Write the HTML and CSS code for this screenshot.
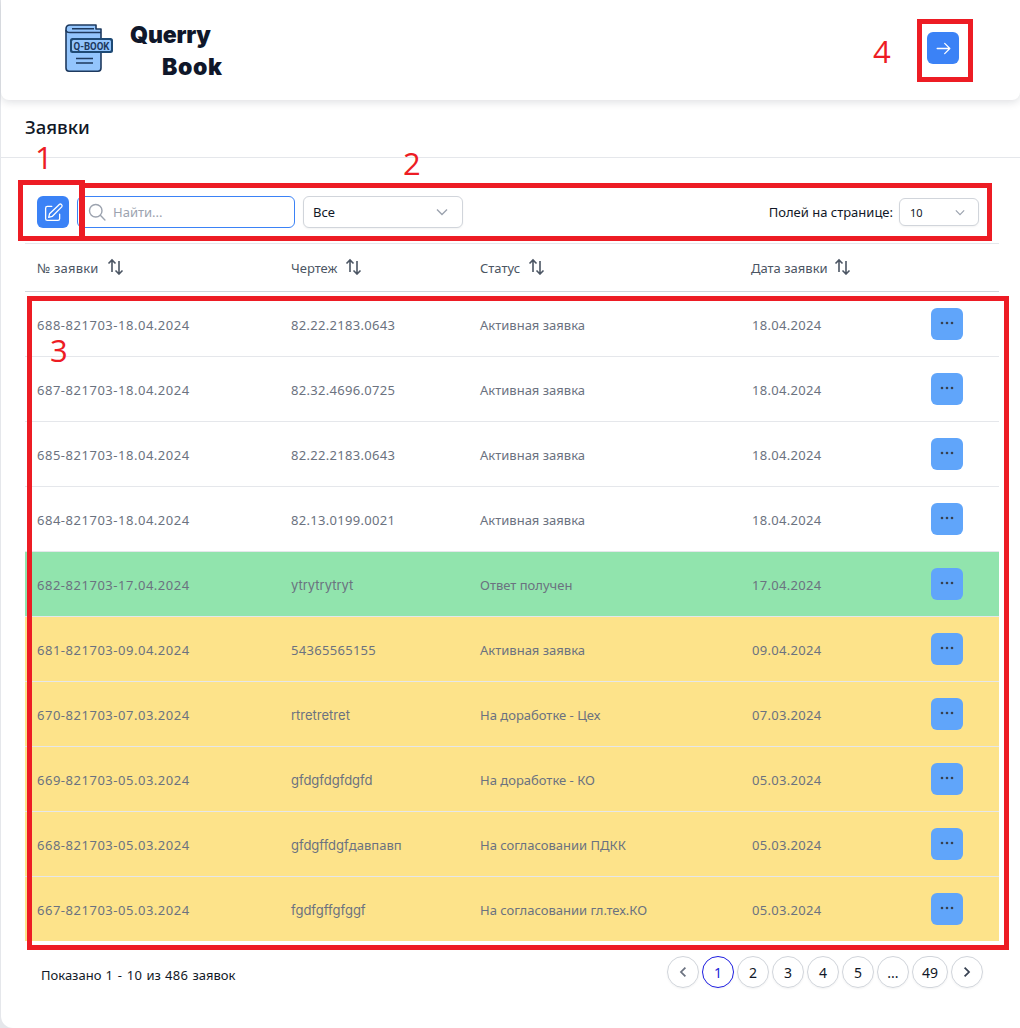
FILE: index.html
```html
<!DOCTYPE html>
<html lang="ru">
<head>
<meta charset="utf-8">
<title>Заявки</title>
<link rel="stylesheet" href="styles.css">
</head>
<body>
<div class="app">
  <header class="topbar">
    <div class="brand">
      <svg class="logo" viewBox="0 0 48 48" width="48" height="48">
        <path d="M5 1H31V5H36V44Q36 47.200 33 47.200H4Q1 47.200 1 44V5Q1 1 5 1Z" fill="#93c5fd" stroke="#1e3a5f" stroke-width="1.600" stroke-linejoin="round"/>
        <path d="M1 6Q1 8.500 5 8.500H36M7 4.800H29" fill="none" stroke="#1e3a5f" stroke-width="1.400"/>
        <rect x="5" y="14" width="43" height="15" rx="2.500" fill="#1e4a75"/>
        <rect x="7" y="16" width="39" height="11" rx="1.500" fill="#93c5fd"/>
        <text x="8.500" y="25.500" class="logo-text" textLength="36" lengthAdjust="spacingAndGlyphs">Q-BOOK</text>
        <path d="M11 34.500H28M11 39H28" stroke="#1e3a5f" stroke-width="1.600"/>
      </svg>
      <div class="wordmark">
        <span class="word-one">Querry</span>
        <span class="word-two">Book</span>
      </div>
    </div>
    <button class="btn btn-primary" type="button" aria-label="Выйти">
      <svg viewBox="0 0 24 24" width="19" height="19" fill="none" stroke="#fff" stroke-width="1.600" stroke-linecap="round" stroke-linejoin="round"><path d="M4 12H20M13.500 5.500L20 12L13.500 18.500"/></svg>
    </button>
  </header>

  <main class="content">
    <h1 class="title">Заявки</h1>

    <div class="toolbar">
      <button class="btn btn-primary" type="button" aria-label="Создать">
        <svg viewBox="0 0 24 24" width="21" height="21" fill="none" stroke="#fff" stroke-width="1.500" stroke-linecap="round" stroke-linejoin="round"><path d="M16.900 4.500l1.700-1.700a2 2 0 0 1 2.800 2.800L10.500 16.500 6.500 17.500l1-4L16.900 4.500z"/><path d="M19 14v5a2 2 0 0 1-2 2H5a2 2 0 0 1-2-2V7a2 2 0 0 1 2-2h5"/></svg>
      </button>
      <label class="search">
        <svg viewBox="0 0 24 24" width="20" height="20" fill="none" stroke="#9ca3af" stroke-width="1.700" stroke-linecap="round"><circle cx="10.500" cy="10.500" r="7.500"/><path d="M16 16L21.500 21.500"/></svg>
        <span class="placeholder">Найти...</span>
      </label>
      <div class="select select-status">
        <span>Все</span>
        <svg viewBox="0 0 12 8" width="12" height="8" fill="none" stroke="#9ca3af" stroke-width="1.400"><path d="M1 1.500L6 6.500L11 1.500"/></svg>
      </div>
      <div class="per-page">
        <span>Полей на странице:</span>
        <div class="select select-small">
          <span>10</span>
          <svg viewBox="0 0 12 8" width="10" height="7" fill="none" stroke="#9ca3af" stroke-width="1.400"><path d="M1 1.500L6 6.500L11 1.500"/></svg>
        </div>
      </div>
    </div>

    <div class="table">
      <div class="row head">
        <div class="cell num-head">№ заявки <svg class="sort" viewBox="0 0 17 17" width="17" height="17" fill="none" stroke="#4b5563" stroke-width="1.600"><path d="M5 14V2M1.500 5.500L5 2L8.500 5.500M12 3V16M8.500 12.500L12 16L15.500 12.500"/></svg></div>
        <div class="cell">Чертеж <svg class="sort" viewBox="0 0 17 17" width="17" height="17" fill="none" stroke="#4b5563" stroke-width="1.600"><path d="M5 14V2M1.500 5.500L5 2L8.500 5.500M12 3V16M8.500 12.500L12 16L15.500 12.500"/></svg></div>
        <div class="cell">Статус <svg class="sort" viewBox="0 0 17 17" width="17" height="17" fill="none" stroke="#4b5563" stroke-width="1.600"><path d="M5 14V2M1.500 5.500L5 2L8.500 5.500M12 3V16M8.500 12.500L12 16L15.500 12.500"/></svg></div>
        <div class="cell date-head">Дата заявки <svg class="sort" viewBox="0 0 17 17" width="17" height="17" fill="none" stroke="#4b5563" stroke-width="1.600"><path d="M5 14V2M1.500 5.500L5 2L8.500 5.500M12 3V16M8.500 12.500L12 16L15.500 12.500"/></svg></div>
        <div class="cell"></div>
      </div>

      <div class="row">
        <div class="cell id">688-821703-18.04.2024</div><div class="cell dig">82.22.2183.0643</div><div class="cell">Активная заявка</div><div class="cell dig">18.04.2024</div>
        <div class="cell"><button class="btn btn-more" type="button" aria-label="Ещё"><svg viewBox="0 0 14 4" width="14" height="4" fill="#374151"><circle cx="2" cy="2" r="1.300"/><circle cx="7" cy="2" r="1.300"/><circle cx="12" cy="2" r="1.300"/></svg></button></div>
      </div>
      <div class="row">
        <div class="cell id">687-821703-18.04.2024</div><div class="cell dig">82.32.4696.0725</div><div class="cell">Активная заявка</div><div class="cell dig">18.04.2024</div>
        <div class="cell"><button class="btn btn-more" type="button" aria-label="Ещё"><svg viewBox="0 0 14 4" width="14" height="4" fill="#374151"><circle cx="2" cy="2" r="1.300"/><circle cx="7" cy="2" r="1.300"/><circle cx="12" cy="2" r="1.300"/></svg></button></div>
      </div>
      <div class="row">
        <div class="cell id">685-821703-18.04.2024</div><div class="cell dig">82.22.2183.0643</div><div class="cell">Активная заявка</div><div class="cell dig">18.04.2024</div>
        <div class="cell"><button class="btn btn-more" type="button" aria-label="Ещё"><svg viewBox="0 0 14 4" width="14" height="4" fill="#374151"><circle cx="2" cy="2" r="1.300"/><circle cx="7" cy="2" r="1.300"/><circle cx="12" cy="2" r="1.300"/></svg></button></div>
      </div>
      <div class="row">
        <div class="cell id">684-821703-18.04.2024</div><div class="cell dig">82.13.0199.0021</div><div class="cell">Активная заявка</div><div class="cell dig">18.04.2024</div>
        <div class="cell"><button class="btn btn-more" type="button" aria-label="Ещё"><svg viewBox="0 0 14 4" width="14" height="4" fill="#374151"><circle cx="2" cy="2" r="1.300"/><circle cx="7" cy="2" r="1.300"/><circle cx="12" cy="2" r="1.300"/></svg></button></div>
      </div>
      <div class="row green">
        <div class="cell id">682-821703-17.04.2024</div><div class="cell lat">ytrytrytryt</div><div class="cell">Ответ получен</div><div class="cell dig">17.04.2024</div>
        <div class="cell"><button class="btn btn-more" type="button" aria-label="Ещё"><svg viewBox="0 0 14 4" width="14" height="4" fill="#374151"><circle cx="2" cy="2" r="1.300"/><circle cx="7" cy="2" r="1.300"/><circle cx="12" cy="2" r="1.300"/></svg></button></div>
      </div>
      <div class="row yellow">
        <div class="cell id">681-821703-09.04.2024</div><div class="cell dig">54365565155</div><div class="cell">Активная заявка</div><div class="cell dig">09.04.2024</div>
        <div class="cell"><button class="btn btn-more" type="button" aria-label="Ещё"><svg viewBox="0 0 14 4" width="14" height="4" fill="#374151"><circle cx="2" cy="2" r="1.300"/><circle cx="7" cy="2" r="1.300"/><circle cx="12" cy="2" r="1.300"/></svg></button></div>
      </div>
      <div class="row yellow">
        <div class="cell id">670-821703-07.03.2024</div><div class="cell lat">rtretretret</div><div class="cell">На доработке - Цех</div><div class="cell dig">07.03.2024</div>
        <div class="cell"><button class="btn btn-more" type="button" aria-label="Ещё"><svg viewBox="0 0 14 4" width="14" height="4" fill="#374151"><circle cx="2" cy="2" r="1.300"/><circle cx="7" cy="2" r="1.300"/><circle cx="12" cy="2" r="1.300"/></svg></button></div>
      </div>
      <div class="row yellow">
        <div class="cell id">669-821703-05.03.2024</div><div class="cell lat">gfdgfdgfdgfd</div><div class="cell">На доработке - КО</div><div class="cell dig">05.03.2024</div>
        <div class="cell"><button class="btn btn-more" type="button" aria-label="Ещё"><svg viewBox="0 0 14 4" width="14" height="4" fill="#374151"><circle cx="2" cy="2" r="1.300"/><circle cx="7" cy="2" r="1.300"/><circle cx="12" cy="2" r="1.300"/></svg></button></div>
      </div>
      <div class="row yellow">
        <div class="cell id">668-821703-05.03.2024</div><div class="cell"><span class="lat">gfdgffdgf</span>давпавп</div><div class="cell">На согласовании ПДКК</div><div class="cell dig">05.03.2024</div>
        <div class="cell"><button class="btn btn-more" type="button" aria-label="Ещё"><svg viewBox="0 0 14 4" width="14" height="4" fill="#374151"><circle cx="2" cy="2" r="1.300"/><circle cx="7" cy="2" r="1.300"/><circle cx="12" cy="2" r="1.300"/></svg></button></div>
      </div>
      <div class="row yellow last">
        <div class="cell id">667-821703-05.03.2024</div><div class="cell lat">fgdfgffgfggf</div><div class="cell">На согласовании гл.тех.КО</div><div class="cell dig">05.03.2024</div>
        <div class="cell"><button class="btn btn-more" type="button" aria-label="Ещё"><svg viewBox="0 0 14 4" width="14" height="4" fill="#374151"><circle cx="2" cy="2" r="1.300"/><circle cx="7" cy="2" r="1.300"/><circle cx="12" cy="2" r="1.300"/></svg></button></div>
      </div>
    </div>

    <footer class="footer">
      <span class="shown">Показано <span class="dig">1 - 10</span> из <span class="dig">486</span> заявок</span>
      <nav class="pager">
        <a class="page page-nav prev"><svg viewBox="0 0 10 14" width="8" height="12" fill="none" stroke="#6b7280" stroke-width="2.200"><path d="M8 1.500L2.500 7L8 12.500"/></svg></a>
        <a class="page current">1</a>
        <a class="page">2</a>
        <a class="page">3</a>
        <a class="page">4</a>
        <a class="page">5</a>
        <a class="page">...</a>
        <a class="page wide">49</a>
        <a class="page page-nav"><svg viewBox="0 0 10 14" width="8" height="12" fill="none" stroke="#374151" stroke-width="2.200"><path d="M2 1.500L7.500 7L2 12.500"/></svg></a>
      </nav>
    </footer>
  </main>
</div>

<div class="mark mark-1"></div>
<div class="mark mark-2"></div>
<div class="mark mark-3"></div>
<div class="mark mark-4"></div>
<span class="num num-1">1</span>
<span class="num num-2">2</span>
<span class="num num-3">3</span>
<span class="num num-4">4</span>
</body>
</html>
```

FILE: styles.css
```css
* { box-sizing: border-box; }

html, body { margin: 0; height: 100%; }

body {
  position: relative;
  background: #e5e7eb;
  font-family: "Noto Sans", sans-serif;
  font-size: 13px;
  color: #6b7280;
  overflow: hidden;
}

.lat { font-family: "Inter", sans-serif; }

.dig { letter-spacing: 0.300px; }

.id { letter-spacing: 0.520px; }

.app {
  margin-left: 1px;
  height: 1028px;
  background: #fff;
  border-radius: 0 0 0 12px;
  display: flex;
  flex-direction: column;
}

.topbar {
  height: 100px;
  flex: none;
  display: flex;
  align-items: flex-start;
  justify-content: space-between;
  padding: 32px 61px 0 64px;
  background: #fff;
  border-radius: 0 0 8px 8px;
  box-shadow: 0 2px 8px rgba(15, 23, 42, 0.14);
  position: relative;
}

.brand { display: flex; gap: 17px; margin-top: -8px; }

.logo { display: block; flex: none; }

.logo-text {
  font-family: "Roboto", sans-serif;
  font-size: 10.500px;
  font-weight: 700;
  fill: #1e3a5f;
}

.wordmark {
  display: flex;
  flex-direction: column;
  font-family: "Inter", sans-serif;
  font-weight: 900;
  font-size: 23px;
  line-height: 32px;
  color: #0f172a;
  margin-top: -5px;
}

.word-one { letter-spacing: -0.200px; }

.word-two { margin-left: 32px; letter-spacing: 0.600px; }

.btn {
  width: 32px;
  height: 32px;
  border: 0;
  padding: 0;
  border-radius: 6px;
  display: flex;
  align-items: center;
  justify-content: center;
  flex: none;
}

.btn-primary { background: #3b82f6; }

.btn-more { background: #60a5fa; }

.btn-more svg { margin-top: -3px; }

.content { flex: 1; display: flex; flex-direction: column; }

.title {
  margin: 0;
  height: 58px;
  padding: 14px 24px 0;
  font-size: 18.500px;
  line-height: 25px;
  font-weight: 500;
  color: #111827;
  border-bottom: 1px solid #e5e7eb;
}

.toolbar {
  height: 85px;
  flex: none;
  display: flex;
  align-items: flex-start;
  padding: 38px 40px 0 36px;
  gap: 8px;
}

.search {
  width: 218px;
  height: 32px;
  border: 1px solid #3b82f6;
  border-radius: 6px;
  display: flex;
  align-items: center;
  gap: 6px;
  padding-left: 9px;
  color: #9ca3af;
}

.select {
  display: flex;
  align-items: center;
  justify-content: space-between;
  border: 1px solid #d1d5db;
  border-radius: 6px;
  color: #111827;
  background: #fff;
  box-shadow: 0 1px 2px rgba(0, 0, 0, 0.05);
}

.select-status {
  width: 160px;
  height: 32px;
  padding: 0 14px 0 9px;
  font-size: 13px;
}

.per-page {
  margin-left: auto;
  margin-right: 1px;
  margin-top: 2px;
  display: flex;
  align-items: center;
  gap: 6px;
  color: #111827;
}

.select-small {
  width: 80px;
  height: 28px;
  padding: 0 13px 0 10px;
  font-size: 11px;
}

.table { margin: 0 20px 0 24px; flex: none; }

.row {
  display: grid;
  grid-template-columns: 254px 189px 272px 179px 80px;
  width: 974px;
  height: 65px;
  padding-left: 12px;
  align-items: center;
  border-bottom: 1px solid #e5e7eb;
}

.row .cell { padding-top: 1px; }

.row .cell:last-child { padding-top: 0; }

.head {
  height: 49px;
  border-top: 1px solid #e5e7eb;
  border-bottom-color: #d1d5db;
  color: #4b5563;
}

.head .cell { display: flex; align-items: center; gap: 8px; }

.head .num-head { letter-spacing: 0.200px; }

.head .date-head { margin-left: -1px; gap: 6px; }

.sort { display: block; margin-top: -3px; }

.green { background: #91e4ad; }

.yellow { background: #fde38a; }

.last { border-bottom: 0; height: 64px; }

.footer {
  display: flex;
  justify-content: space-between;
  align-items: flex-start;
  padding: 15px 37px 0 40px;
}

.shown {
  color: #111827;
  line-height: 32px;
  padding-top: 3px;
  word-spacing: 0.800px;
}

.pager { display: flex; gap: 3px; }

.page {
  width: 32px;
  height: 32px;
  border: 1px solid #d1d5db;
  border-radius: 16px;
  display: flex;
  align-items: center;
  justify-content: center;
  color: #111827;
  font-size: 14px;
  box-shadow: 0 1px 2px rgba(0, 0, 0, 0.05);
}

.current { border-color: #1d1de0; color: #2323d8; }

.wide { width: 36px; }

.mark {
  position: absolute;
  border: 5px solid #ed1c24;
  pointer-events: none;
}

.mark-1 { left: 18px; top: 180px; width: 67px; height: 61px; }
.mark-2 { left: 79px; top: 183px; width: 913px; height: 58px; }
.mark-3 { left: 27px; top: 296px; width: 982px; height: 654px; }
.mark-4 { left: 917px; top: 19px; width: 56px; height: 63px; }

.num {
  position: absolute;
  font-family: "Open Sans", sans-serif;
  font-size: 31px;
  line-height: 30px;
  color: #ed1c24;
}

.num-1 { left: 35px; top: 142px; }
.num-2 { left: 403px; top: 148px; }
.num-3 { left: 50px; top: 335px; }
.num-4 { left: 873px; top: 36px; }
```
